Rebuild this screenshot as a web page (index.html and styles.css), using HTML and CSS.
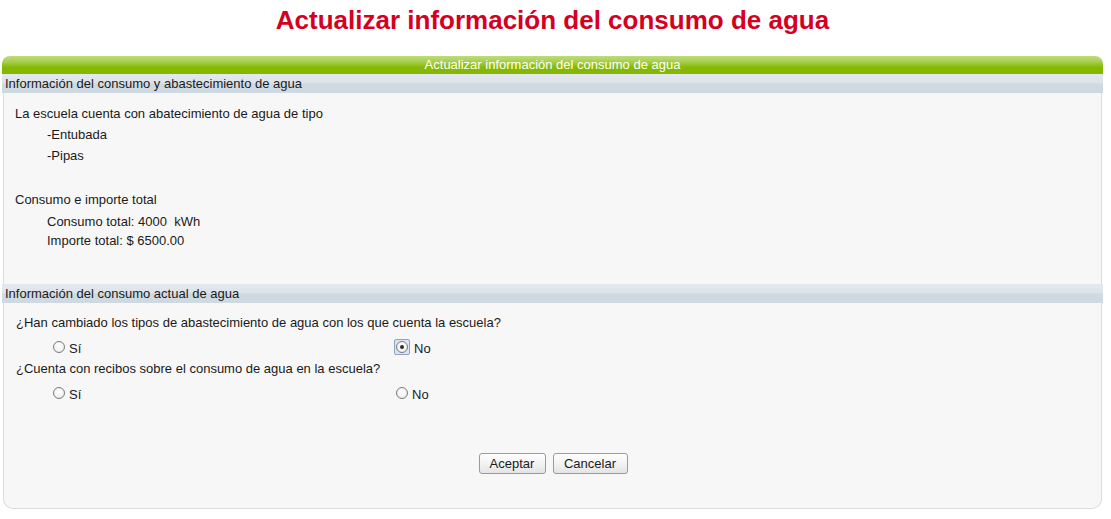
FILE: index.html
```html
<!DOCTYPE html>
<html lang="es">
<head>
<meta charset="utf-8">
<title>Actualizar información del consumo de agua</title>
<link rel="stylesheet" href="styles.css">
</head>
<body>
<div class="page">
  <h1 class="title">Actualizar información del consumo de agua</h1>
  <div class="panel">
    <div class="panel-head">Actualizar información del consumo de agua</div>
    <div class="section-head">Información del consumo y abastecimiento de agua</div>
    <div class="section-body s1">
      <p class="line">La escuela cuenta con abatecimiento de agua de tipo</p>
      <p class="line indent">-Entubada</p>
      <p class="line indent">-Pipas</p>
      <p class="line gap">Consumo e importe total</p>
      <p class="line indent small first">Consumo total: 4000&nbsp; kWh</p>
      <p class="line indent small">Importe total: $ 6500.00</p>
    </div>
    <div class="section-head">Información del consumo actual de agua</div>
    <div class="section-body s2">
      <p class="question">¿Han cambiado los tipos de abastecimiento de agua con los que cuenta la escuela?</p>
      <div class="options">
        <label class="option"><span class="radio"></span><span class="opt-text">Sí</span></label>
        <label class="option"><span class="focus"><span class="radio checked"></span></span><span class="opt-text">No</span></label>
      </div>
      <p class="question">¿Cuenta con recibos sobre el consumo de agua en la escuela?</p>
      <div class="options">
        <label class="option"><span class="radio"></span><span class="opt-text">Sí</span></label>
        <label class="option"><span class="radio"></span><span class="opt-text">No</span></label>
      </div>
      <div class="actions">
        <button class="btn" type="button">Aceptar</button>
        <button class="btn" type="button">Cancelar</button>
      </div>
    </div>
  </div>
</div>
</body>
</html>
```
FILE: styles.css
```css
html, body {
  margin: 0;
  padding: 0;
  background: #ffffff;
}
body {
  font-family: "Liberation Sans", Arial, sans-serif;
  font-size: 13px;
  color: #1a1a1a;
}
.page {
  margin-left: 2px;
  width: 1101px;
}
.title {
  margin: 0;
  padding-top: 5px;
  height: 56px;
  box-sizing: border-box;
  text-align: center;
  font-size: 26px;
  line-height: 30px;
  font-weight: bold;
  color: #d5001f;
}
.panel {
  width: 1101px;
}
.panel-head {
  height: 18px;
  line-height: 18px;
  border-radius: 8px 8px 0 0;
  background: linear-gradient(to bottom, #bedd7a 0%, #a5cc4a 35%, #86b902 62%, #84b800 100%);
  color: #ffffff;
  text-align: center;
  font-size: 13px;
}
.section-head {
  height: 19px;
  line-height: 19px;
  padding-left: 3px;
  background: linear-gradient(to bottom, #e5e9ef 0%, #dde3e9 45%, #cfd9e1 55%, #cfd9e1 100%);
  color: #1a1a1a;
  font-size: 13px;
}
.section-body {
  margin: 0 1px 0 1px;
  background: #f7f7f7;
  border-left: 1px solid #dcdcdc;
  border-right: 1px solid #dcdcdc;
}
.s1 {
  padding: 10px 0 34px 11px;
}
.line {
  margin: 0;
  line-height: 21px;
  height: 21px;
}
.indent {
  padding-left: 32px;
}
.gap {
  margin-top: 23px;
}
.small {
  line-height: 19px;
  height: 19px;
}
.small.first {
  margin-top: 2px;
}
.s2 {
  padding: 9px 0 34px 12px;
  border-bottom: 1px solid #dcdcdc;
  border-radius: 0 0 10px 10px;
}
.question {
  margin: 0;
  line-height: 21px;
  height: 21px;
}
.options {
  display: grid;
  grid-template-columns: 343px auto;
  padding-left: 37px;
  height: 25px;
  align-items: center;
}
.option {
  display: flex;
  align-items: center;
  height: 25px;
}
.opt-text {
  padding-top: 5px;
  padding-left: 4px;
}
.radio {
  display: inline-block;
  width: 10px;
  height: 10px;
  border: 1px solid #7b7b7b;
  border-radius: 50%;
  background: radial-gradient(circle at 50% 40%, #ffffff 0%, #f2f2f2 60%, #dedede 100%);
  position: relative;
  flex: none;
  margin-top: 2px;
}
.radio.checked {
  margin-top: 0;
}
.radio.checked::after {
  content: "";
  position: absolute;
  left: 3px;
  top: 3px;
  width: 4px;
  height: 4px;
  border-radius: 50%;
  background: #2d2d2d;
}
.focus {
  display: inline-flex;
  align-items: center;
  justify-content: center;
  width: 14px;
  height: 14px;
  margin-left: -2px;
  margin-top: 2px;
  border: 1px solid #8aa4c6;
  border-radius: 2px;
  background: #dbe4ef;
}
.actions {
  display: flex;
  justify-content: center;
  gap: 7px;
  margin-top: 49px;
  padding-right: 11px;
}
.btn {
  font-family: "Liberation Sans", Arial, sans-serif;
  font-size: 13px;
  color: #1a1a1a;
  height: 21px;
  padding: 0 9px;
  border: 1px solid #9a9a9a;
  border-radius: 3px;
  background: linear-gradient(to bottom, #ffffff 0%, #f3f3f3 50%, #e4e4e4 100%);
}
.btn:first-child {
  width: 67px;
}
.btn:last-child {
  width: 75px;
}
```
